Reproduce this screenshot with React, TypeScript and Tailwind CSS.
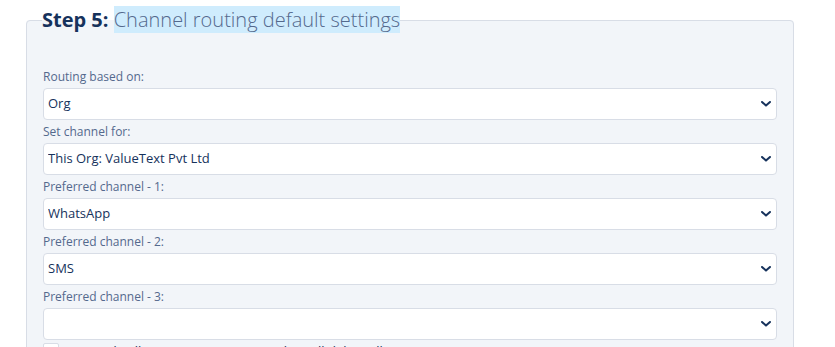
import { useState } from 'react'

const fields = [
  { label: 'Routing based on:', value: 'Org', options: ['Org', 'User', 'Queue'] },
  { label: 'Set channel for:', value: 'This Org: ValueText Pvt Ltd', options: ['This Org: ValueText Pvt Ltd'] },
  { label: 'Preferred channel - 1:', value: 'WhatsApp', options: ['WhatsApp', 'SMS', 'Email'] },
  { label: 'Preferred channel - 2:', value: 'SMS', options: ['WhatsApp', 'SMS', 'Email'] },
  { label: 'Preferred channel - 3:', value: '', options: ['', 'WhatsApp', 'SMS', 'Email'] },
]

function Chevron() {
  return (
    <svg
      viewBox="0 0 10 6"
      className="pointer-events-none absolute right-[6px] top-1/2 h-[6px] w-[10px] -translate-y-1/2"
    >
      <path d="M1 1 L5 4.6 L9 1" fill="none" stroke="#16325c" strokeWidth="2" strokeLinecap="round" strokeLinejoin="round" />
    </svg>
  )
}

function SelectField({ label, value, options }: { label: string; value: string; options: string[] }) {
  const [current, setCurrent] = useState(value)

  return (
    <div>
      <label className="block pb-[2px] pt-[3px] text-[12px] leading-[18px] text-[#54698d]">{label}</label>
      <div className="relative">
        <select
          value={current}
          onChange={(e) => setCurrent(e.target.value)}
          className="block h-[32px] w-full appearance-none rounded-[4px] border border-[#d8dde6] bg-white pl-[4px] pr-8 text-[13px] text-[#16325c] outline-none"
        >
          {options.map((option) => (
            <option key={option} value={option}>
              {option}
            </option>
          ))}
        </select>
        <Chevron />
      </div>
    </div>
  )
}

export default function App() {
  return (
    <div className="min-h-screen bg-white pt-[7px] font-['Open_Sans','Lato',sans-serif]">
      <fieldset className="ml-[26px] w-[768px] rounded-[4px] border border-[#d8dde6] bg-[#f2f5f9] pl-[16px] pr-[16px] pb-6">
        <legend className="-ml-px pr-0 text-[20px] leading-[26px]">
          <span className="font-bold text-[#16325c]">Step 5: </span>
          <span className="bg-[#cfecfd] font-light text-[#54698d]">Channel routing default settings</span>
        </legend>

        <div className="pt-[32px]">
          {fields.map((field) => (
            <SelectField key={field.label} {...field} />
          ))}

          <label className="mt-[2px] flex items-center gap-[12px] text-[13px] leading-[18px] text-[#16325c]">
            <span className="h-[16px] w-[16px] shrink-0 rounded-[2px] border border-[#d8dde6] bg-white" />
            Override all user routing settings (This will delete all user settings)
          </label>
        </div>
      </fieldset>
    </div>
  )
}
